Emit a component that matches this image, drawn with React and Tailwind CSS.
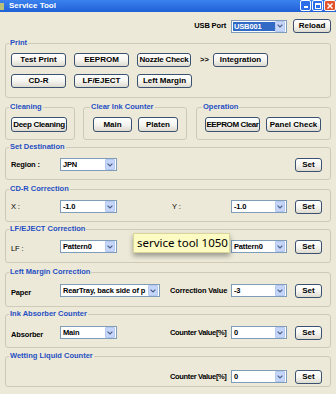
import React from "react";

const Btn = ({ children, className = "" }) => (
  <button
    className={`flex h-[14px] items-center justify-center whitespace-nowrap rounded-[3px] border border-[#3a5270] bg-linear-to-b from-white via-[#f6f5f0] to-[#dddbd0] text-[8px] font-bold leading-none text-black ${className}`}
  >
    {children}
  </button>
);

const Arrow = () => (
  <span className="mr-px flex h-[11px] w-[10px] shrink-0 items-center justify-center rounded-[1px] border border-[#b4c8f0] bg-[#c6d6fa]">
    <svg width="6" height="4" viewBox="0 0 6 4">
      <path d="M0.6 0.6 L3 3 L5.4 0.6" stroke="#4b5f8a" strokeWidth="1.2" fill="none" />
    </svg>
  </span>
);

const Select = ({ value, className = "w-[57px]", highlight = false }) => (
  <div className={`flex h-[13px] shrink-0 items-center border border-[#7f9db9] bg-white ${className}`}>
    <span className="flex flex-1 items-center overflow-hidden pl-px">
      <span
        className={`whitespace-nowrap text-[7.5px] font-bold leading-[9px] tracking-[-0.15px] ${
          highlight ? "w-full bg-[#316ac5] pl-px text-white" : "pl-px text-black"
        }`}
      >
        {value}
      </span>
    </span>
    <Arrow />
  </div>
);

const Group = ({ title, className = "", legend = "ml-[3px]", children }) => (
  <fieldset className={`shrink-0 rounded-[3px] border border-[#cfcab7] ${className}`}>
    <legend className={`px-px text-[7.5px] font-bold leading-[10px] text-[#1f4fc3] ${legend}`}>{title}</legend>
    {children}
  </fieldset>
);

const Label = ({ children, className = "w-[49px]", bold = true }) => (
  <span
    className={`shrink-0 whitespace-nowrap text-[7.5px] leading-none tracking-[-0.15px] text-black ${bold ? "font-bold" : ""} ${className}`}
  >
    {children}
  </span>
);

export default function App() {
  return (
    <div className="relative h-[394px] w-[336px] overflow-hidden bg-[#ece9d8] font-['Liberation_Sans',Arial,sans-serif]">
      {/* title bar */}
      <div className="flex h-[12px] items-center bg-linear-to-b from-[#3b82ef] to-[#1f60d6]">
        <span className="h-[7px] w-[4px] bg-[#b8c07a]" />
        <span className="ml-[5px] text-[8px] font-bold leading-none text-white">Service Tool</span>
        <div className="ml-auto flex h-[12px] items-start gap-px">
          <div className="flex h-[11px] w-[11px] items-end justify-center rounded-[2px] border border-white bg-[#2b6ee8] pb-[2px]">
            <span className="h-[2px] w-[4px] bg-white" />
          </div>
          <div className="flex h-[11px] w-[11px] items-center justify-center rounded-[2px] border border-white bg-[#2b6ee8]">
            <span className="h-[6px] w-[6px] border border-t-2 border-white" />
          </div>
          <div className="flex h-[11px] w-[12px] items-center justify-center rounded-[2px] border border-white bg-[#e0532b]">
            <svg width="6" height="6" viewBox="0 0 6 6">
              <path d="M0.5 0.5 L5.5 5.5 M5.5 0.5 L0.5 5.5" stroke="white" strokeWidth="1.4" />
            </svg>
          </div>
        </div>
      </div>

      {/* usb row */}
      <div className="mt-[7px] flex h-[14px] items-center justify-end pr-[5px]">
        <Label className="mr-[5px]">USB Port</Label>
        <Select value="USB001" className="w-[56px]" highlight />
        <Btn className="ml-[6px] w-[38px]">Reload</Btn>
      </div>

      <div className="flex flex-col px-[5px]">
        <Group title="Print" className="mt-[5px] h-[60px]">
          <div className="mt-[5px] flex items-center pl-[5px]">
            <Btn className="w-[55px]">Test Print</Btn>
            <Btn className="ml-[8px] w-[55px]">EEPROM</Btn>
            <Btn className="ml-[8px] w-[54px] tracking-[-0.2px]">Nozzle Check</Btn>
            <span className="ml-[9px] mr-[4px] w-[9px] text-[7.5px] font-bold leading-none">&gt;&gt;</span>
            <Btn className="w-[55px]">Integration</Btn>
          </div>
          <div className="mt-[7px] flex items-center pl-[5px]">
            <Btn className="w-[55px]">CD-R</Btn>
            <Btn className="ml-[8px] w-[55px]">LF/EJECT</Btn>
            <Btn className="ml-[8px] w-[55px]">Left Margin</Btn>
          </div>
        </Group>

        <div className="mt-[4px] flex">
          <Group title="Cleaning" className="h-[38px] w-[70px]">
            <div className="mt-[5px] flex pl-[5px]">
              <Btn className="h-[15px] w-[56px] tracking-[-0.3px]">Deep Cleaning</Btn>
            </div>
          </Group>
          <Group title="Clear Ink Counter" className="ml-[8px] h-[38px] w-[104px]" legend="ml-[6px]">
            <div className="mt-[5px] flex pl-[9px]">
              <Btn className="h-[15px] w-[39px]">Main</Btn>
              <Btn className="ml-[6px] h-[15px] w-[40px]">Platen</Btn>
            </div>
          </Group>
          <Group title="Operation" className="ml-[9px] h-[38px] flex-1" legend="ml-[5px]">
            <div className="mt-[5px] flex pl-[8px]">
              <Btn className="h-[15px] w-[55px] tracking-[-0.4px]">EEPROM Clear</Btn>
              <Btn className="ml-[6px] h-[15px] w-[55px]">Panel Check</Btn>
            </div>
          </Group>
        </div>

        <Group title="Set Destination" className="mt-[2px] h-[38px]">
          <div className="mt-[5px] flex h-[15px] items-center pl-[5px]">
            <Label>Region :</Label>
            <Select value="JPN" />
            <Btn className="ml-[178px] w-[27px]">Set</Btn>
          </div>
        </Group>

        <Group title="CD-R Correction" className="mt-[4px] h-[38px]">
          <div className="mt-[5px] flex h-[15px] items-center pl-[5px]">
            <Label bold={false}>X :</Label>
            <Select value="-1.0" />
            <span className="w-[55px] shrink-0" />
            <Label bold={false} className="w-[59px]">Y :</Label>
            <Select value="-1.0" className="w-[56px]" />
            <Btn className="ml-[8px] w-[27px]">Set</Btn>
          </div>
        </Group>

        <Group title="LF/EJECT Correction" className="mt-[2px] h-[39px]">
          <div className="mt-[5px] flex h-[15px] items-center pl-[5px]">
            <Label bold={false} className="w-[49px] pt-[4px]">LF :</Label>
            <Select value="Pattern0" />
            <span className="w-[114px] shrink-0" />
            <Select value="Pattern0" className="w-[56px]" />
            <Btn className="ml-[8px] w-[27px]">Set</Btn>
          </div>
        </Group>

        <Group title="Left Margin Correction" className="mt-[4px] h-[40px]">
          <div className="mt-[6px] flex h-[15px] items-center pl-[5px]">
            <Label className="w-[49px] pt-[4px]">Paper</Label>
            <Select value="RearTray, back side of p" className="w-[100px]" />
            <span className="w-[10px] shrink-0" />
            <Label className="w-[61px]">Correction Value</Label>
            <Select value="-3" className="w-[56px]" />
            <Btn className="ml-[8px] w-[27px]">Set</Btn>
          </div>
        </Group>

        <Group title="Ink Absorber Counter" className="mt-[2px] h-[39px]">
          <div className="mt-[6px] flex h-[15px] items-center pl-[5px]">
            <Label className="w-[49px] pt-[4px]">Absorber</Label>
            <Select value="Main" />
            <span className="w-[53px] shrink-0" />
            <Label className="w-[61px] tracking-[-0.35px]">Counter Value[%]</Label>
            <Select value="0" className="w-[56px]" />
            <Btn className="ml-[8px] w-[27px]">Set</Btn>
          </div>
        </Group>

        <Group title="Wetting Liquid Counter" className="mt-[3px] h-[36px]">
          <div className="mt-[8px] flex h-[15px] items-center pl-[164px]">
            <Label className="w-[61px] tracking-[-0.35px]">Counter Value[%]</Label>
            <Select value="0" className="w-[56px]" />
            <Btn className="ml-[8px] w-[27px]">Set</Btn>
          </div>
        </Group>
      </div>

      {/* tooltip */}
      <div className="absolute left-[133px] top-[233px] flex h-[20px] w-[97px] items-center border border-[#d8d49a] bg-[#fdfbc4] pl-[3px] shadow-[0_3px_5px_rgba(0,0,0,0.35)]">
        <span className="whitespace-nowrap font-['Noto_Sans',sans-serif] text-[11.5px] leading-none text-black">service tool 1050</span>
      </div>
    </div>
  );
}
